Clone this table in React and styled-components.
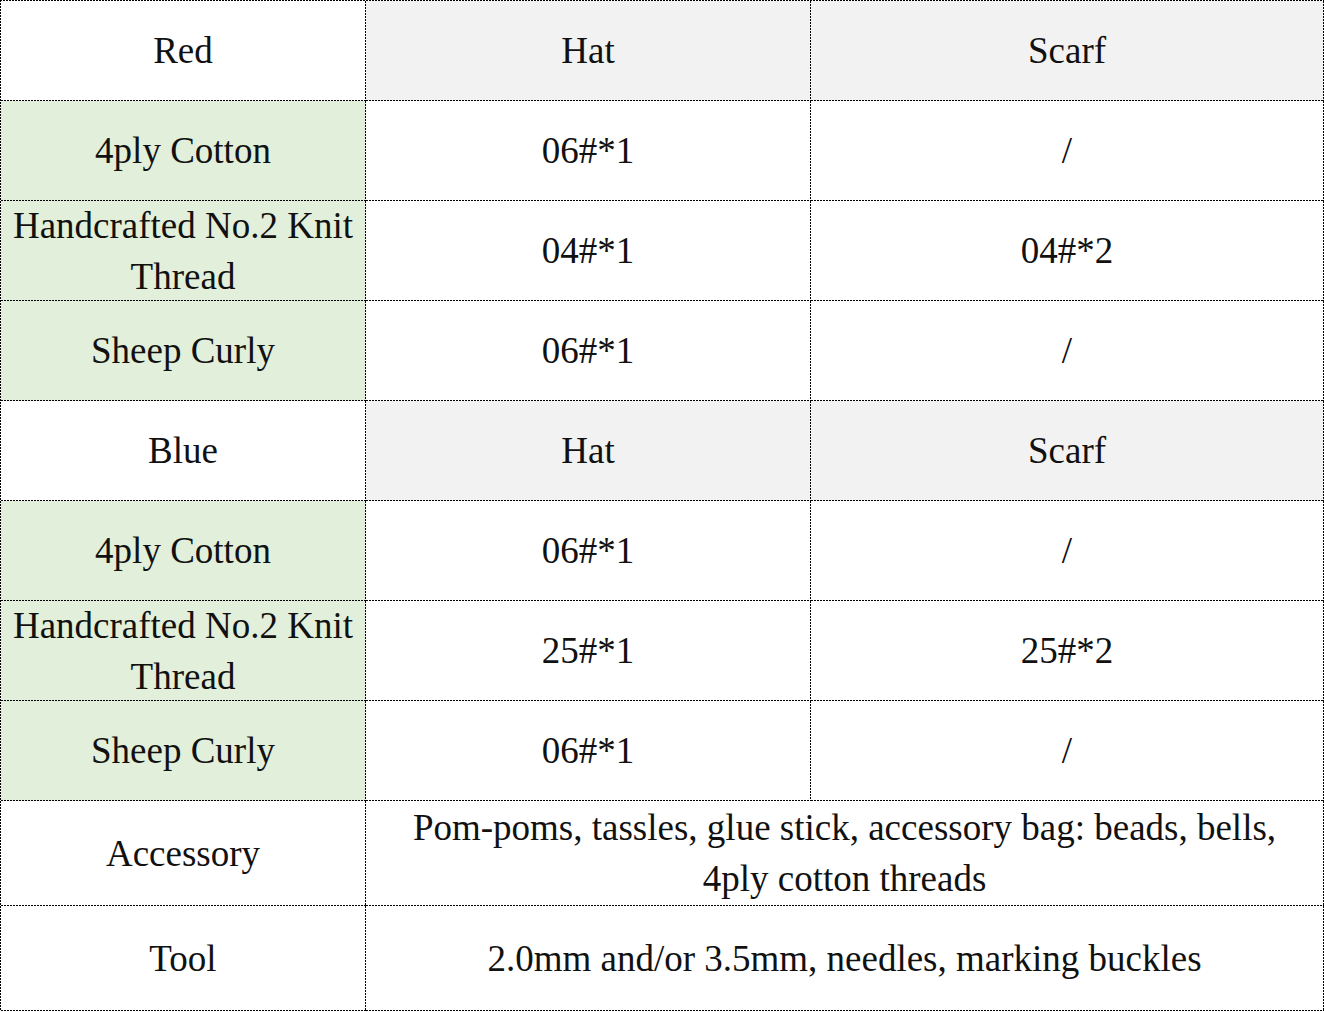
import React from "react";
import styled, { createGlobalStyle, css } from "styled-components";

const Global = createGlobalStyle`
  html, body { margin: 0; padding: 0; background: #fff; }
  body { font-family: "Liberation Serif", "Times New Roman", serif; }
`;

const dotsH = "repeating-linear-gradient(to right, #000 0 2px, transparent 2px 3px)";
const dotsV = "repeating-linear-gradient(to bottom, #000 0 2px, transparent 2px 3px)";

const Grid = styled.div`
  display: grid;
  grid-template-columns: 365px 445px 513px;
  width: 1324px;
  box-sizing: border-box;
  padding: 1px 0 0 1px;
  background-image: ${dotsH}, ${dotsV};
  background-size: 100% 1px, 1px 100%;
  background-position: left top, left top;
  background-repeat: no-repeat;
`;

const tones = { green: "#e2efda", grey: "#f2f2f2", white: "#fff" };

const Cell = styled.div`
  box-sizing: border-box;
  display: flex;
  align-items: center;
  justify-content: center;
  text-align: center;
  padding: 0 ${(p) => (p.$span ? "28px" : "4px")} 1px;
  font-family: "Liberation Serif", "Times New Roman", serif;
  font-size: 37px;
  line-height: 51px;
  color: #111;
  background-color: ${(p) => tones[p.$tone || "white"]};
  background-image: ${dotsH}, ${dotsV};
  background-size: 100% 1px, 1px 100%;
  background-position: left bottom, right top;
  background-repeat: no-repeat;
  ${(p) =>
    p.$span &&
    css`
      grid-column: span ${p.$span};
    `}
  height: ${(p) => (p.$tall ? "105px" : "100px")};
  padding-right: ${(p) => (p.$span ? "29px" : "5px")};
`;

const groups = [
  {
    color: "Red",
    rows: [
      ["4ply Cotton", "06#*1", "/"],
      ["Handcrafted No.2 Knit Thread", "04#*1", "04#*2"],
      ["Sheep Curly", "06#*1", "/"],
    ],
  },
  {
    color: "Blue",
    rows: [
      ["4ply Cotton", "06#*1", "/"],
      ["Handcrafted No.2 Knit Thread", "25#*1", "25#*2"],
      ["Sheep Curly", "06#*1", "/"],
    ],
  },
];

export default function App() {
  return (
    <>
      <Global />
      <Grid>
        {groups.map((g) => (
          <React.Fragment key={g.color}>
            <Cell>{g.color}</Cell>
            <Cell $tone="grey">Hat</Cell>
            <Cell $tone="grey">Scarf</Cell>
            {g.rows.map((r, i) => (
              <React.Fragment key={i}>
                <Cell $tone="green">{r[0]}</Cell>
                <Cell>{r[1]}</Cell>
                <Cell>{r[2]}</Cell>
              </React.Fragment>
            ))}
          </React.Fragment>
        ))}
        <Cell $tall>Accessory</Cell>
        <Cell $tall $span={2}>
          Pom-poms, tassles, glue stick, accessory bag: beads, bells, 4ply cotton threads
        </Cell>
        <Cell $tall>Tool</Cell>
        <Cell $tall $span={2}>
          2.0mm and/or 3.5mm, needles, marking buckles
        </Cell>
      </Grid>
    </>
  );
}
